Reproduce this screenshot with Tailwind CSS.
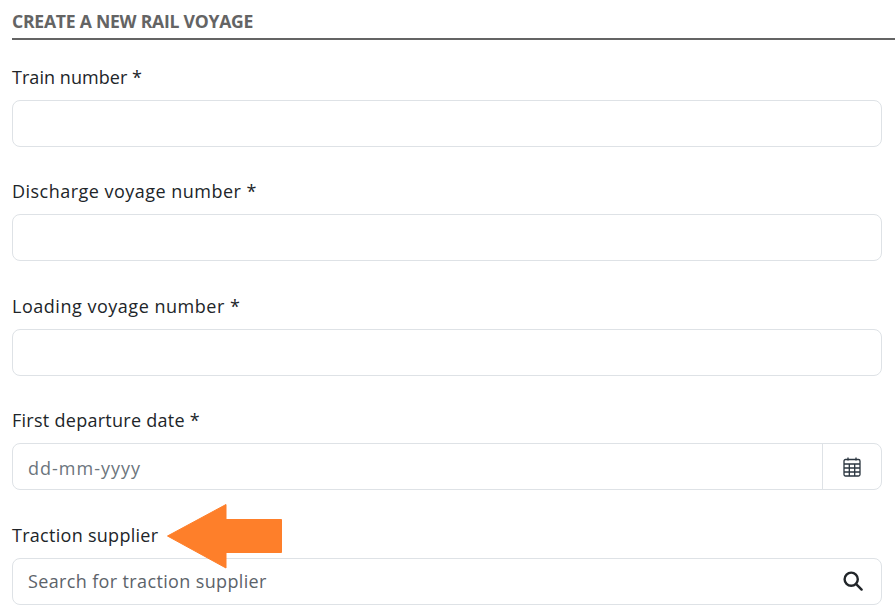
<!DOCTYPE html>
<html lang="en">
<head>
  <meta charset="UTF-8">
  <title>Create a new rail voyage</title>
  <script src="https://cdn.jsdelivr.net/npm/@tailwindcss/browser@4"></script>
</head>
<body class="bg-white font-['Open_Sans',sans-serif] text-[#212529] overflow-hidden">
  <div class="relative w-[895px] h-[613px] overflow-hidden">
    <div class="pl-3 pt-[11px]">
      <h2 class="h-[29px] text-[17.6px] leading-[21px] font-bold uppercase tracking-[-0.25px] text-[#646464] border-b-2 border-[#646464]">Create a new rail voyage</h2>
    </div>
    <form class="pl-3 pr-[13px] pt-[25px] flex flex-col gap-[32.4px]">
      <div>
        <label class="block h-[35px] text-[18px] leading-[25px] tracking-[0.05px]">Train number *</label>
        <input type="text" class="block w-full h-[47px] border border-[#dee2e6] rounded-lg">
      </div>
      <div>
        <label class="block h-[35px] text-[18px] leading-[25px] tracking-[0.48px]">Discharge voyage number *</label>
        <input type="text" class="block w-full h-[47px] border border-[#dee2e6] rounded-lg">
      </div>
      <div>
        <label class="block h-[35px] text-[18px] leading-[25px] tracking-[0.52px]">Loading voyage number *</label>
        <input type="text" class="block w-full h-[47px] border border-[#dee2e6] rounded-lg">
      </div>
      <div>
        <label class="block h-[35px] text-[18px] leading-[25px] tracking-[0.27px]">First departure date *</label>
        <div class="flex h-[47px] border border-[#dee2e6] rounded-lg">
          <input type="text" placeholder="dd-mm-yyyy" class="flex-1 min-w-0 pl-[15px] pr-[15px] pt-[3px] text-[18px] tracking-[1px] placeholder:text-[#6c757d] outline-none">
          <span class="w-[59px] flex items-center justify-center border-l border-[#dee2e6]">
            <svg class="w-[18px] h-[20px]" viewBox="0 0 18 20" fill="none" stroke="#2b3640" stroke-width="1.3">
              <path d="M5 .5v3M13 .5v3"/>
              <rect x="1" y="2.5" width="16" height="16.500" rx="1.5"/>
              <path d="M1 7h16M1 11h16M1 15h16M6.3 7v12M11.7 7v12"/>
            </svg>
          </span>
        </div>
      </div>
      <div>
        <label class="block h-[35px] text-[18px] leading-[25px] tracking-[0.28px]">Traction supplier</label>
        <div class="flex h-[47px] border border-[#dee2e6] rounded-lg">
          <input type="text" placeholder="Search for traction supplier" class="flex-1 min-w-0 px-[15px] pt-px text-[18px] tracking-[0.36px] placeholder:text-[#5c636a] outline-none">
          <span class="w-[59px] flex items-center justify-center pl-[3px]">
            <svg class="w-[20px] h-[20px]" viewBox="0 0 20 20" fill="none" stroke="#212529" stroke-width="2.4" stroke-linecap="round">
              <circle cx="8.2" cy="8.2" r="6.6"/>
              <path d="M13.2 13.2l5.4 5.4"/>
            </svg>
          </span>
        </div>
      </div>
    </form>
    <!-- annotation arrow on top of the screenshot -->
    <svg class="absolute left-[160px] top-[498px]" width="130" height="76" viewBox="160 498 130 76">
      <path d="M167.500 536L226 504.500V519.500H281.500V552.500H226V568Z" fill="#fe7f2a" stroke="#fe7f2a" stroke-width="1" stroke-linejoin="round"/>
    </svg>
  </div>
</body>
</html>
